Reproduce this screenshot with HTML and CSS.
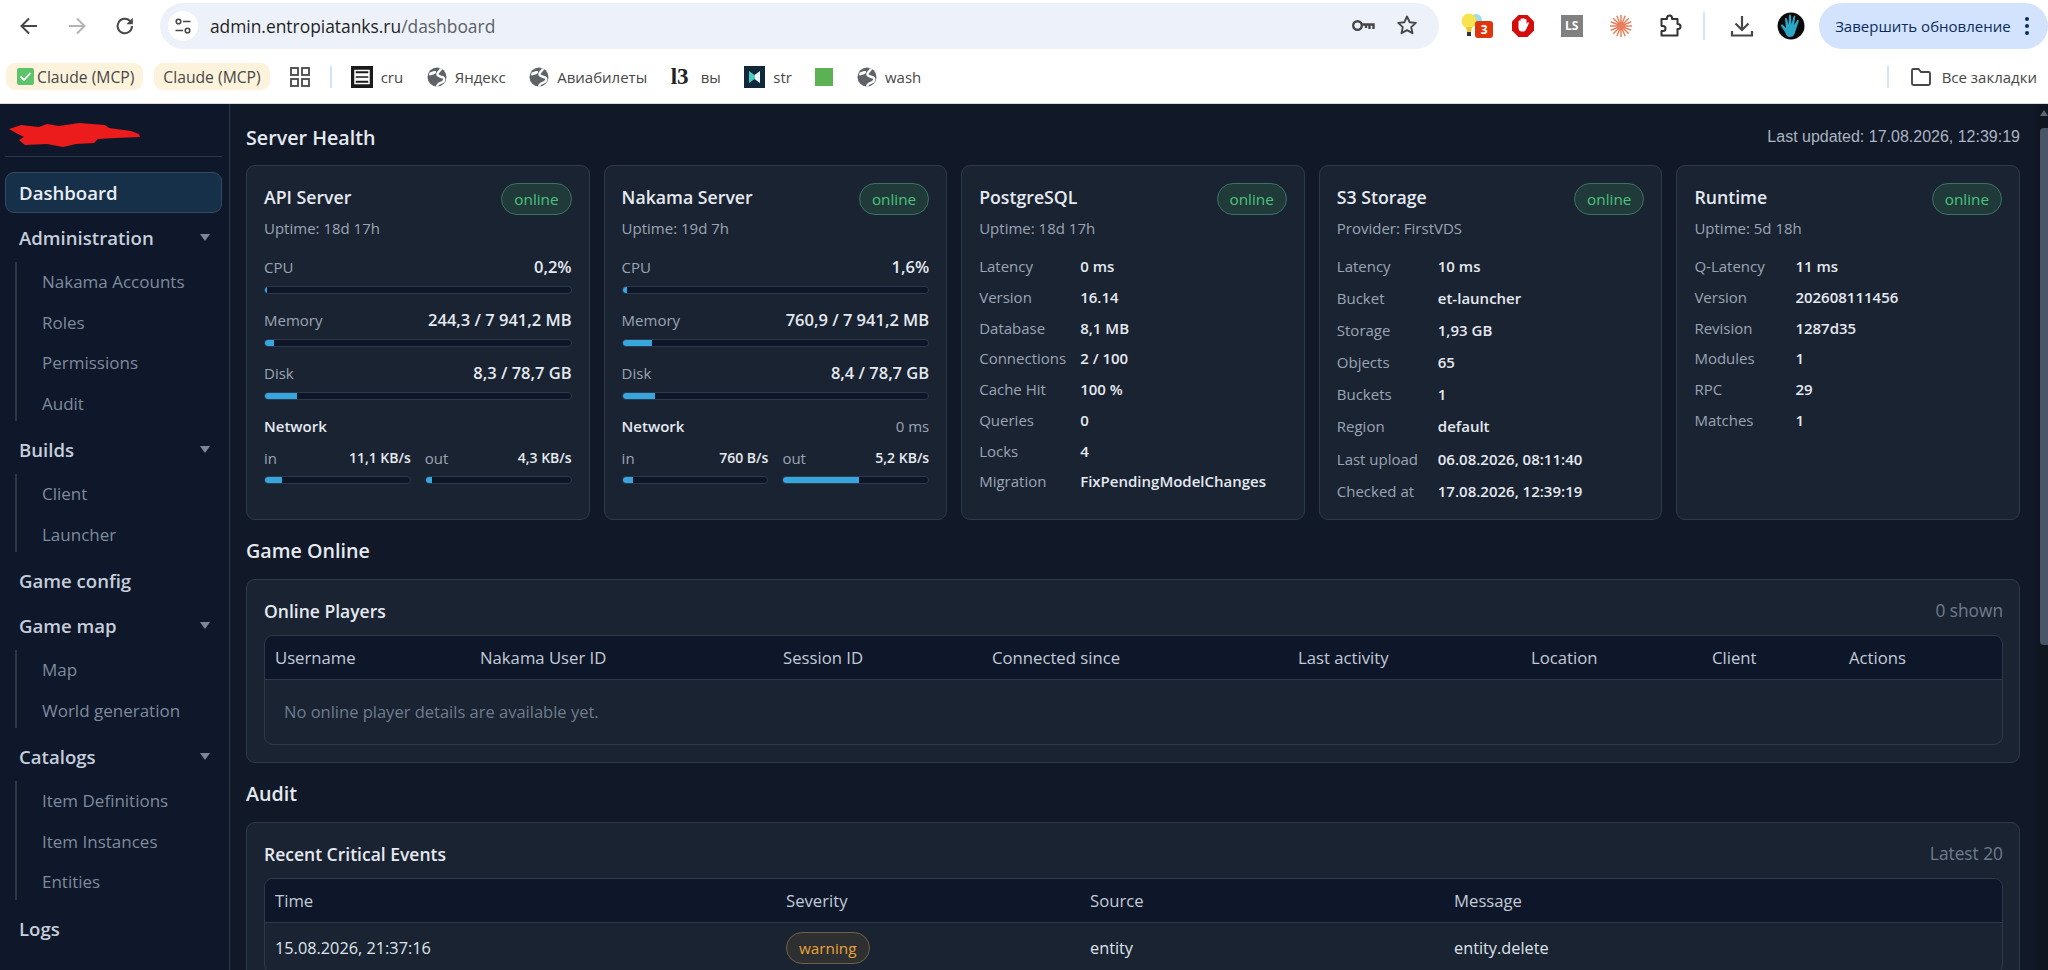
FILE: index.html
```html
<!DOCTYPE html>
<html lang="en">

<head>
    <meta charset="UTF-8">
    <meta name="viewport" content="width=device-width, initial-scale=1.0">
    <title>Dashboard</title>
    <link rel="stylesheet" href="styles.css">
</head>

<body>
    <svg class="defs" width="0" height="0">
        <symbol id="globe" viewBox="0 0 20 20">
            <circle cx="10" cy="10" r="9.500" fill="#5f6368"/>
            <path d="M2.500 5.500c2-.5 3.500-2 6.500-1.500.5 1.500-.5 3-2.500 3.500S3 9 2 8z" fill="#fff"/>
            <path d="M14 1.500c-.5 2.500-3 3-3.500 5s2 3 4 3.500 3.500 1 2.500 3.500-4 2-5.500 3.500-1.500 2-1.500 2.500" fill="none" stroke="#fff" stroke-width="2.400"/>
        </symbol>
    </svg>

    <!-- browser toolbar -->
    <header class="browser">
        <div class="toolbar">
            <div class="tb-btn">
                <svg width="22" height="22" viewBox="0 0 22 22"><path d="M19 11H4M11 3.500l-7.500 7.500 7.500 7.500" fill="none" stroke="#474747" stroke-width="2"/></svg>
            </div>
            <div class="tb-btn">
                <svg width="22" height="22" viewBox="0 0 22 22"><path d="M3 11h15M11 3.500l7.500 7.500-7.500 7.500" fill="none" stroke="#b4b4b4" stroke-width="2"/></svg>
            </div>
            <div class="tb-btn">
                <svg width="22" height="22" viewBox="0 0 22 22"><path d="M18 11a7.200 7.200 0 1 1-2.200-5.200L18 8" fill="none" stroke="#474747" stroke-width="2"/><path d="M18.800 2.800v6.400h-6.400z" fill="#474747"/></svg>
            </div>
            <div class="address">
                <div class="site-info">
                    <svg width="18" height="18" viewBox="0 0 18 18"><g fill="none" stroke="#474747" stroke-width="1.600"><circle cx="4.500" cy="4.500" r="2.300"/><circle cx="13.500" cy="13.500" r="2.300"/><path d="M9 4.500h7.500M1.500 13.500H9"/></g></svg>
                </div>
                <div class="url">admin.entropiatanks.ru<span class="url-path">/dashboard</span></div>
                <div class="addr-icons">
                    <div class="addr-btn">
                        <svg width="24" height="24" viewBox="0 0 24 24"><g fill="none" stroke="#474747" stroke-width="2.400"><circle cx="6.500" cy="11.500" r="4.300"/><path d="M11 10.500h11.500v4.500M18.500 10.500v4.500M15 10.500v3.500"/></g></svg>
                    </div>
                    <div class="addr-btn">
                        <svg width="22" height="22" viewBox="0 0 22 22"><path d="M11 2.500l2.600 5.700 6.200.7-4.600 4.200 1.300 6.100-5.500-3.100-5.500 3.100 1.300-6.100-4.600-4.200 6.200-.7z" fill="none" stroke="#474747" stroke-width="1.900" stroke-linejoin="round"/></svg>
                    </div>
                </div>
            </div>
            <div class="extensions">
                <div class="tb-ext">
                    <svg width="30" height="32" viewBox="0 0 30 32"><circle cx="17" cy="10" r="6" fill="#9fdcea"/><circle cx="10" cy="11" r="7.500" fill="#f7e34f"/><path d="M7 17h6l-1 5H8z" fill="#e8c63a"/><rect x="8" y="22" width="4" height="4" fill="#333"/></svg>
                    <span class="ext-badge">3</span>
                </div>
                <div class="tb-ext">
                    <svg width="24" height="24" viewBox="0 0 24 24"><path d="M7.500 1h9L23 7.500v9L16.500 23h-9L1 16.500v-9z" fill="#d40c0c"/><path d="M7.500 11V7.500a1 1 0 0 1 2 0V5.500a1 1 0 0 1 2 0v-.5a1 1 0 0 1 2 0v1a1 1 0 0 1 2 0v4l1-1.500c.8-.8 1.800 0 1.300 1l-2.600 5.800c-.6 1.300-1.500 2.200-3.200 2.200h-1c-2.500 0-3.500-1.500-3.500-4z" fill="#fff"/></svg>
                </div>
                <div class="tb-ext"><span class="ext-ls">LS</span></div>
                <div class="tb-ext">
                    <svg width="24" height="24" viewBox="0 0 24 24"><g stroke="#e8805f" stroke-width="1.500"><path d="M12 1v22M1 12h22M4.200 4.200l15.600 15.600M19.800 4.200L4.200 19.800M7.800 1.800l8.400 20.400M16.200 1.800L7.800 22.200M1.800 7.800l20.400 8.400M22.200 7.800L1.800 16.200"/></g></svg>
                </div>
                <div class="tb-ext">
                    <svg width="24" height="24" viewBox="0 0 24 24"><path d="M3.500 5h5.500V4a2.500 2.500 0 0 1 5 0v1h5.500v5h.5a2.500 2.500 0 0 1 0 5h-.5v6.500h-16V17H5a2.500 2.500 0 0 0 0-5H3.500z" fill="none" stroke="#333" stroke-width="2" stroke-linejoin="round"/></svg>
                </div>
                <div class="tb-sep"></div>
                <div class="tb-ext dl">
                    <svg width="24" height="24" viewBox="0 0 24 24"><path d="M12 2v14M5.500 9.500L12 16l6.500-6.500M2 17v4.500h20V17" fill="none" stroke="#474747" stroke-width="2.200"/></svg>
                </div>
                <div class="tb-ext">
                    <svg width="28" height="28" viewBox="0 0 28 28"><circle cx="14" cy="14" r="13.500" fill="#0a0a0a"/><path d="M13 25c-3 0-4-2-5-5l-4-6c-.5-1.200 1-2 2-1l3 3-1-9c0-1.200 1.600-1.400 2-.2l1.500 6L12 3.500c0-1.200 1.800-1.200 2 0l.5 8.500 2-7.500c.3-1.200 2-1 1.800.3L17 13l3-4.500c.7-1 2.200-.3 1.700.9L18.500 19c-.8 3-2 6-5.500 6z" fill="#2ba6c4"/></svg>
                </div>
            </div>
            <div class="update-btn">
                <span>Завершить обновление</span>
                <svg width="6" height="20" viewBox="0 0 6 20"><g fill="#0b2d5b"><circle cx="3" cy="3" r="2"/><circle cx="3" cy="10" r="2"/><circle cx="3" cy="17" r="2"/></g></svg>
            </div>
        </div>

        <div class="bookmarks">
            <div class="pill pill-check">
                <svg width="17" height="17" viewBox="0 0 17 17"><rect width="17" height="17" rx="2" fill="#5cc46a"/><path d="M3.500 8.500l3.500 3.500 6.500-7" fill="none" stroke="#fff" stroke-width="1.800"/></svg>
                <span>Claude (MCP)</span>
            </div>
            <div class="pill"><span>Claude (MCP)</span></div>
            <svg class="apps" width="20" height="20" viewBox="0 0 20 20"><g fill="none" stroke="#474747" stroke-width="1.800"><rect x="1" y="1" width="7" height="7"/><rect x="12" y="1" width="7" height="7"/><rect x="1" y="12" width="7" height="7"/><rect x="12" y="12" width="7" height="7"/></g></svg>
            <div class="bm-sep first-sep"></div>
            <div class="bm">
                <svg width="22" height="22" viewBox="0 0 22 22"><rect width="22" height="22" fill="#1a1a1a"/><path d="M4 4.500h14v3.500H4zM4 9.500h14v3H4zM4 14h14v3.500H4z" fill="none" stroke="#fff" stroke-width="1.500"/></svg>
                <span>cru</span>
            </div>
            <div class="bm"><svg width="20" height="20"><use href="#globe"/></svg><span>Яндекс</span></div>
            <div class="bm"><svg width="20" height="20"><use href="#globe"/></svg><span>Авиабилеты</span></div>
            <div class="bm"><span class="logo-l3">l3</span><span>вы</span></div>
            <div class="bm">
                <svg width="21" height="22" viewBox="0 0 21 22"><rect width="21" height="22" fill="#10283a"/><path d="M5 5l5.500 4v4L5 17z" fill="#3fd0c0"/><path d="M16 5l-5.500 4v4l5.500 4z" fill="#e8f5f5"/></svg>
                <span>str</span>
            </div>
            <div class="bm"><span class="green-square"></span></div>
            <div class="bm"><svg width="20" height="20"><use href="#globe"/></svg><span>wash</span></div>
            <div class="bm-right">
                <div class="bm-sep"></div>
                <svg width="22" height="20" viewBox="0 0 22 20"><path d="M2 3.500a1.500 1.500 0 0 1 1.500-1.500h5l2.500 3h7.500A1.500 1.500 0 0 1 20 6.500v10a1.500 1.500 0 0 1-1.500 1.500h-15A1.500 1.500 0 0 1 2 16.500z" fill="none" stroke="#474747" stroke-width="1.900"/></svg>
                <span>Все закладки</span>
            </div>
        </div>
    </header>

    <div class="app">
        <aside class="sidebar">
            <div class="brand">
                <svg width="131" height="26" viewBox="0 0 131 26"><path d="M0 7L12 3l18 2 8-3 12 2 20-3 26 2 4 3 22 3 8 3 1 3-24 1-18 1-4 4-18 1-13 3-16-3-22 1-6-5 5-3-6-3z" fill="#ec1c1c"/></svg>
            </div>
            <nav class="nav">
                <a class="nav-item active">Dashboard</a>
                <a class="nav-item">Administration<i class="caret"></i></a>
                <div class="sub">
                    <a>Nakama Accounts</a>
                    <a>Roles</a>
                    <a>Permissions</a>
                    <a>Audit</a>
                </div>
                <a class="nav-item">Builds<i class="caret"></i></a>
                <div class="sub">
                    <a>Client</a>
                    <a>Launcher</a>
                </div>
                <a class="nav-item">Game config</a>
                <a class="nav-item">Game map<i class="caret"></i></a>
                <div class="sub">
                    <a>Map</a>
                    <a>World generation</a>
                </div>
                <a class="nav-item">Catalogs<i class="caret"></i></a>
                <div class="sub">
                    <a>Item Definitions</a>
                    <a>Item Instances</a>
                    <a>Entities</a>
                </div>
                <a class="nav-item">Logs</a>
            </nav>
        </aside>

        <main class="content">
            <div class="section-head">
                <h2>Server Health</h2>
                <span class="updated">Last updated: 17.08.2026, 12:39:19</span>
            </div>

            <div class="health-grid">
                <div class="card">
                    <div class="card-head"><h3>API Server</h3><span class="badge">online</span></div>
                    <div class="sub-title">Uptime: 18d 17h</div>
                    <div class="metrics">
                        <div class="metric-row"><span>CPU</span><b>0,2%</b></div>
                        <div class="bar"><div class="fill" style="width: 0.5%"></div></div>
                        <div class="metric-row"><span>Memory</span><b>244,3 / 7 941,2 MB</b></div>
                        <div class="bar"><div class="fill" style="width: 3.1%"></div></div>
                        <div class="metric-row"><span>Disk</span><b>8,3 / 78,7 GB</b></div>
                        <div class="bar"><div class="fill" style="width: 10.5%"></div></div>
                        <div class="metric-row"><b class="net-title">Network</b></div>
                        <div class="net">
                            <div>
                                <div class="net-row"><span>in</span><b>11,1 KB/s</b></div>
                                <div class="bar"><div class="fill" style="width: 11.5%"></div></div>
                            </div>
                            <div>
                                <div class="net-row"><span>out</span><b>4,3 KB/s</b></div>
                                <div class="bar"><div class="fill" style="width: 4.4%"></div></div>
                            </div>
                        </div>
                    </div>
                </div>

                <div class="card">
                    <div class="card-head"><h3>Nakama Server</h3><span class="badge">online</span></div>
                    <div class="sub-title">Uptime: 19d 7h</div>
                    <div class="metrics">
                        <div class="metric-row"><span>CPU</span><b>1,6%</b></div>
                        <div class="bar"><div class="fill" style="width: 1.6%"></div></div>
                        <div class="metric-row"><span>Memory</span><b>760,9 / 7 941,2 MB</b></div>
                        <div class="bar"><div class="fill" style="width: 9.6%"></div></div>
                        <div class="metric-row"><span>Disk</span><b>8,4 / 78,7 GB</b></div>
                        <div class="bar"><div class="fill" style="width: 10.7%"></div></div>
                        <div class="metric-row"><b class="net-title">Network</b><span>0 ms</span></div>
                        <div class="net">
                            <div>
                                <div class="net-row"><span>in</span><b>760 B/s</b></div>
                                <div class="bar"><div class="fill" style="width: 7.5%"></div></div>
                            </div>
                            <div>
                                <div class="net-row"><span>out</span><b>5,2 KB/s</b></div>
                                <div class="bar"><div class="fill" style="width: 52%"></div></div>
                            </div>
                        </div>
                    </div>
                </div>

                <div class="card">
                    <div class="card-head"><h3>PostgreSQL</h3><span class="badge">online</span></div>
                    <div class="sub-title">Uptime: 18d 17h</div>
                    <div class="kv">
                        <span>Latency</span><b>0 ms</b>
                        <span>Version</span><b>16.14</b>
                        <span>Database</span><b>8,1 MB</b>
                        <span>Connections</span><b>2 / 100</b>
                        <span>Cache Hit</span><b>100 %</b>
                        <span>Queries</span><b>0</b>
                        <span>Locks</span><b>4</b>
                        <span>Migration</span><b>FixPendingModelChanges</b>
                    </div>
                </div>

                <div class="card">
                    <div class="card-head"><h3>S3 Storage</h3><span class="badge">online</span></div>
                    <div class="sub-title">Provider: FirstVDS</div>
                    <div class="kv kv-wide">
                        <span>Latency</span><b>10 ms</b>
                        <span>Bucket</span><b>et-launcher</b>
                        <span>Storage</span><b>1,93 GB</b>
                        <span>Objects</span><b>65</b>
                        <span>Buckets</span><b>1</b>
                        <span>Region</span><b>default</b>
                        <span>Last upload</span><b>06.08.2026, 08:11:40</b>
                        <span>Checked at</span><b>17.08.2026, 12:39:19</b>
                    </div>
                </div>

                <div class="card">
                    <div class="card-head"><h3>Runtime</h3><span class="badge">online</span></div>
                    <div class="sub-title">Uptime: 5d 18h</div>
                    <div class="kv">
                        <span>Q-Latency</span><b>11 ms</b>
                        <span>Version</span><b>202608111456</b>
                        <span>Revision</span><b>1287d35</b>
                        <span>Modules</span><b>1</b>
                        <span>RPC</span><b>29</b>
                        <span>Matches</span><b>1</b>
                    </div>
                </div>
            </div>

            <div class="section-head"><h2>Game Online</h2></div>
            <section class="panel">
                <div class="panel-head"><h4>Online Players</h4><span>0 shown</span></div>
                <div class="table-wrap">
                    <table class="players">
                        <thead>
                            <tr>
                                <th>Username</th>
                                <th>Nakama User ID</th>
                                <th>Session ID</th>
                                <th>Connected since</th>
                                <th>Last activity</th>
                                <th>Location</th>
                                <th>Client</th>
                                <th>Actions</th>
                            </tr>
                        </thead>
                        <tbody>
                            <tr><td colspan="8" class="empty">No online player details are available yet.</td></tr>
                        </tbody>
                    </table>
                </div>
            </section>

            <div class="section-head"><h2>Audit</h2></div>
            <section class="panel">
                <div class="panel-head"><h4>Recent Critical Events</h4><span>Latest 20</span></div>
                <div class="table-wrap">
                    <table class="events">
                        <thead>
                            <tr>
                                <th>Time</th>
                                <th>Severity</th>
                                <th>Source</th>
                                <th>Message</th>
                            </tr>
                        </thead>
                        <tbody>
                            <tr>
                                <td>15.08.2026, 21:37:16</td>
                                <td><span class="badge badge-warning">warning</span></td>
                                <td>entity</td>
                                <td>entity.delete</td>
                            </tr>
                        </tbody>
                    </table>
                </div>
            </section>
        </main>

        <div class="scrollbar">
            <i class="scroll-up"></i>
            <div class="scroll-thumb"></div>
        </div>
    </div>
</body>

</html>
```

FILE: styles.css
```css
* {
    box-sizing: border-box;
}

body {
    margin: 0;
    height: 100vh;
    overflow: hidden;
    display: flex;
    flex-direction: column;
    background-color: #111827;
    color: #e5e9f0;
    font-family: "Open Sans", "Noto Sans", Arial, sans-serif;
    font-size: 16px;
}

.defs {
    position: absolute;
}

/* browser toolbar */
.browser {
    flex: none;
    height: 104px;
    background-color: #fff;
    border-bottom: 1px solid #d9dbde;
    color: #474747;
}

.toolbar {
    height: 52px;
    display: flex;
    align-items: center;
    padding-left: 5px;
}

.tb-btn {
    width: 48px;
    display: flex;
    justify-content: center;
}

.address {
    width: 1280px;
    height: 46px;
    margin-left: 11px;
    padding: 0 10px 0 8px;
    display: flex;
    align-items: center;
    background-color: #edf2fa;
    border-radius: 23px;
}

.site-info {
    width: 30px;
    height: 30px;
    display: flex;
    align-items: center;
    justify-content: center;
    background-color: #fff;
    border-radius: 50%;
}

.url {
    margin-left: 12px;
    font-size: 17.4px;
    color: #1f1f1f;
}

.url-path {
    color: #5b5e66;
}

.addr-icons {
    margin-left: auto;
    display: flex;
}

.addr-btn {
    width: 44px;
    display: flex;
    justify-content: center;
}

.extensions {
    margin-left: 10px;
    display: flex;
    align-items: center;
}

.tb-ext {
    position: relative;
    width: 49px;
    display: flex;
    justify-content: center;
    align-items: center;
}

.tb-ext.dl {
    margin-left: 1px;
}

.ext-badge {
    position: absolute;
    left: 26px;
    top: 11px;
    width: 18px;
    height: 17px;
    background-color: #e0360e;
    border-radius: 3px;
    color: #fff;
    font-size: 12px;
    font-weight: 700;
    line-height: 17px;
    text-align: center;
}

.ext-ls {
    width: 22px;
    height: 22px;
    background-color: #808080;
    color: #fff;
    font-size: 12px;
    font-weight: 700;
    line-height: 22px;
    text-align: center;
}

.tb-sep {
    width: 2px;
    height: 28px;
    margin: 0 11px 0 9px;
    background-color: #d3e3fd;
}

.update-btn {
    width: 229px;
    height: 46px;
    margin-left: 4px;
    padding: 0 18px 0 16px;
    display: flex;
    align-items: center;
    justify-content: space-between;
    background-color: #d3e3fd;
    border-radius: 23px;
    color: #0b2d5b;
    font-size: 15px;
}

/* bookmarks row */
.bookmarks {
    height: 51px;
    display: flex;
    align-items: center;
    gap: 23.5px;
    padding: 0 11px 2px 6px;
    font-size: 15px;
}

.pill {
    height: 27px;
    margin-right: -12.5px;
    padding: 0 9px;
    display: flex;
    align-items: center;
    gap: 3px;
    background-color: #fdf3dc;
    border-radius: 9px;
    font-size: 15.7px;
}

.pill-check {
    padding-left: 11px;
}

.apps {
    margin-left: 9px;
}

.bm {
    display: flex;
    align-items: center;
    gap: 8px;
}

.bm-sep {
    width: 2px;
    height: 22px;
    background-color: #d3e3fd;
}

.first-sep {
    margin-right: -5px;
    margin-left: -3px;
}

.logo-l3 {
    width: 22px;
    font-family: "Liberation Serif", serif;
    font-size: 23px;
    font-weight: 700;
    line-height: 22px;
    color: #222;
}

.green-square {
    width: 18px;
    height: 18px;
    background-color: #5cb155;
}

.bm-right {
    margin-left: auto;
    display: flex;
    align-items: center;
    gap: 10px;
}

.bm-right .bm-sep {
    margin-right: 11px;
}

/* app */
.app {
    flex: 1;
    min-height: 0;
    display: flex;
}

.sidebar {
    flex: none;
    width: 230px;
    padding: 0 7px 0 5px;
    background-color: #0f172a;
    border-right: 1px solid #2b3648;
}

.brand {
    height: 53px;
    padding: 18px 0 0 4px;
    border-bottom: 1px solid #2d3a4c;
}

.brand svg {
    display: block;
}

.nav {
    margin-top: 15px;
    display: flex;
    flex-direction: column;
    gap: 4px;
}

.nav-item {
    height: 41px;
    padding: 0 11px 0 13px;
    display: flex;
    align-items: center;
    justify-content: space-between;
    border: 1px solid transparent;
    border-radius: 9px;
    color: #c5cedb;
    font-size: 18.6px;
    font-weight: 600;
}

.nav-item.active {
    background-color: #17304a;
    border-color: #34495f;
    color: #e8edf4;
}

.caret {
    width: 0;
    height: 0;
    border-left: 5px solid transparent;
    border-right: 5px solid transparent;
    border-top: 7px solid #7b8797;
}

.sub {
    margin: 0 0 4px 10px;
    padding-left: 25px;
    display: flex;
    flex-direction: column;
    gap: 3px;
    border-left: 2px solid #2d3748;
}

.sub a {
    height: 37.5px;
    padding-top: 2px;
    display: flex;
    align-items: center;
    color: #7e8b9d;
    font-size: 17px;
    font-weight: 500;
}

/* main */
.content {
    flex: 1;
    min-width: 0;
    padding: 18px 16px 0;
}

.section-head {
    height: 30px;
    margin-bottom: 13px;
    display: flex;
    align-items: center;
    justify-content: space-between;
}

.section-head h2 {
    margin: 0;
    font-size: 19.7px;
    font-weight: 600;
    color: #e5e9f0;
}

.updated {
    font-family: "Liberation Sans", Arial, sans-serif;
    font-size: 16px;
    color: #aab4c2;
}

.health-grid {
    display: grid;
    grid-template-columns: repeat(5, 1fr);
    gap: 14px;
    margin-bottom: 16px;
}

.card,
.panel {
    background-color: #1a2332;
    border: 1px solid #2d3a4c;
    border-radius: 9px;
}

.card {
    padding: 17px 17px 16px;
}

.card-head {
    display: flex;
    justify-content: space-between;
    align-items: flex-start;
}

.card-head h3 {
    margin: 0;
    font-size: 17.7px;
    font-weight: 600;
    line-height: 28px;
}

.badge {
    height: 32px;
    padding: 0 12px;
    display: inline-flex;
    align-items: center;
    background-color: #1f3a38;
    border: 1px solid #3b7263;
    border-radius: 16px;
    color: #4cc27f;
    font-size: 15.3px;
    font-weight: 500;
}

.badge-warning {
    background-color: #2e2f30;
    border-color: #6f6142;
    color: #e9a33c;
}

.sub-title {
    margin-top: 1px;
    color: #9aa5b4;
    font-size: 15px;
    line-height: 24px;
}

.metrics {
    margin-top: 15px;
}

.metric-row,
.net-row {
    display: flex;
    justify-content: space-between;
    color: #9aa5b4;
    font-size: 15px;
    line-height: 24px;
}

.metric-row b,
.net-row b,
.kv b {
    color: #e5e9f0;
    font-weight: 600;
}

.metric-row b {
    font-size: 16.5px;
}

.metric-row .net-title {
    font-size: 15px;
}

.net-row b {
    font-size: 14px;
}

.bar {
    height: 8px;
    margin: 7px 0 14px;
    overflow: hidden;
    background-color: #0d1526;
    border: 1px solid #2b3a4e;
    border-radius: 4px;
}

.fill {
    height: 100%;
    background-color: #38a6dc;
}

.net {
    margin-top: 8px;
    display: grid;
    grid-template-columns: 1fr 1fr;
    gap: 14px;
}

.net .bar {
    margin: 6px 0 0;
}

.kv {
    margin-top: 14px;
    display: grid;
    grid-template-columns: 101px 1fr;
    row-gap: 6.75px;
    color: #9aa5b4;
    font-size: 15px;
    line-height: 24px;
}

.kv-wide {
    row-gap: 8.1px;
}

.panel {
    margin-bottom: 16px;
    padding: 20px 16px 17px 17px;
}

.panel-head {
    display: flex;
    justify-content: space-between;
    margin-bottom: 13px;
    color: #6f7c8d;
    font-size: 17.3px;
    line-height: 22px;
}

.panel-head h4 {
    margin: 0;
    color: #e5e9f0;
    font-size: 17.5px;
    font-weight: 600;
}

.table-wrap {
    overflow: hidden;
    border: 1px solid #2d3a4c;
    border-radius: 9px;
}

table {
    width: 100%;
    table-layout: fixed;
    border-collapse: collapse;
}

th {
    height: 44px;
    padding: 0 10px;
    background-color: #0e172a;
    border-bottom: 1px solid #2d3a4c;
    color: #c3cbd6;
    font-size: 16.7px;
    font-weight: 500;
    text-align: left;
}

td {
    height: 50px;
    padding: 0 10px;
    color: #dfe4ec;
    font-size: 16.3px;
}

.empty {
    height: 64px;
    padding-left: 19px;
    color: #6f7c8d;
    font-size: 16.5px;
}

.players th:nth-child(1) { width: 205px; }
.players th:nth-child(2) { width: 303px; }
.players th:nth-child(3) { width: 209px; }
.players th:nth-child(4) { width: 306px; }
.players th:nth-child(5) { width: 233px; }
.players th:nth-child(6) { width: 181px; }
.players th:nth-child(7) { width: 137px; }

.events th:nth-child(1) { width: 511px; }
.events th:nth-child(2) { width: 304px; }
.events th:nth-child(3) { width: 364px; }

/* page scrollbar */
.scrollbar {
    flex: none;
    width: 12px;
    padding-left: 4px;
    background-color: #10161f;
}

.scroll-up {
    display: block;
    width: 0;
    height: 0;
    margin-top: 6px;
    border-left: 4px solid transparent;
    border-right: 4px solid transparent;
    border-bottom: 6px solid #5b6778;
}

.scroll-thumb {
    height: 517px;
    margin-top: 12px;
    background-color: #4a5668;
    border-radius: 4px 0 0 4px;
}
```
